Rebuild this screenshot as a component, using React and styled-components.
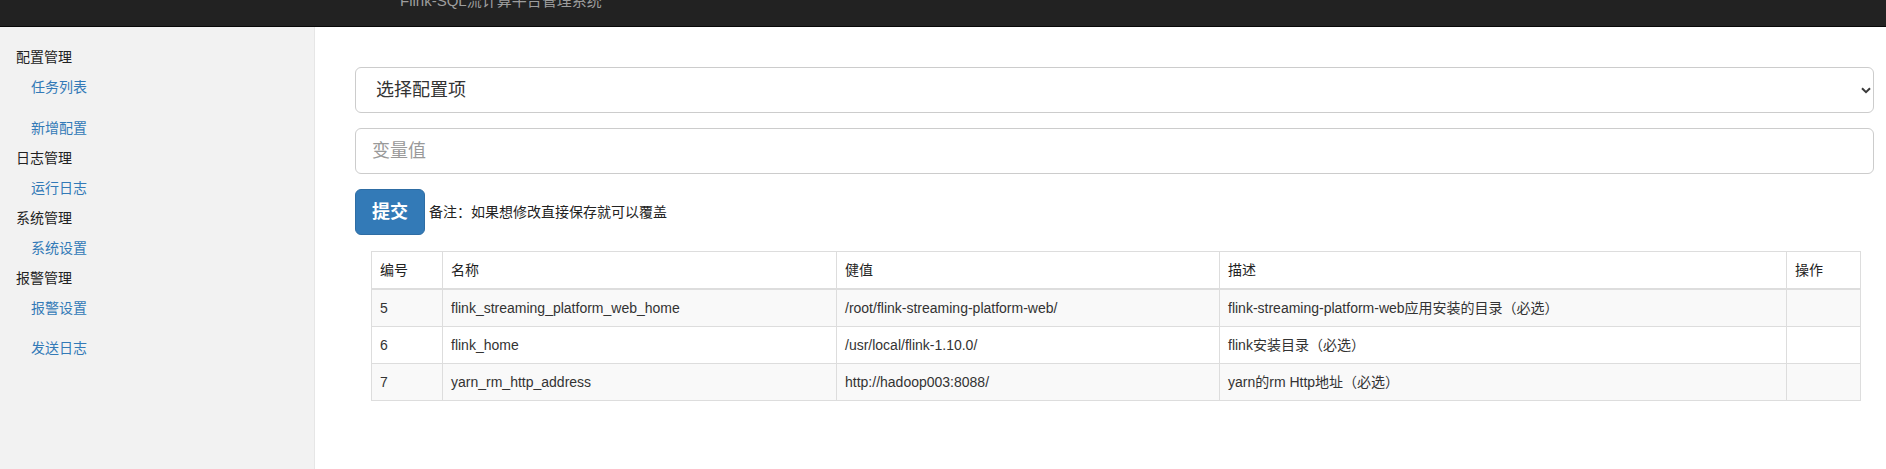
import styled, { createGlobalStyle } from 'styled-components'

const GlobalStyle = createGlobalStyle`
  html, body {
    margin: 0;
    padding: 0;
    background: #fff;
  }
  body {
    font-family: "Liberation Sans", "Noto Sans CJK SC", sans-serif;
    font-size: 14px;
    line-height: 20px;
    color: #333;
  }
  * {
    box-sizing: border-box;
  }
`

const menu = [
  { title: '配置管理', links: [{ label: '任务列表' }, { label: '新增配置', gap: 11 }] },
  { title: '日志管理', links: [{ label: '运行日志' }] },
  { title: '系统管理', links: [{ label: '系统设置' }] },
  { title: '报警管理', links: [{ label: '报警设置' }, { label: '发送日志', gap: 10 }] },
]

const columns = [
  { label: '编号', width: 71 },
  { label: '名称', width: 394 },
  { label: '健值', width: 383 },
  { label: '描述', width: 567 },
  { label: '操作', width: 74 },
]

const rows = [
  ['5', 'flink_streaming_platform_web_home', '/root/flink-streaming-platform-web/', 'flink-streaming-platform-web应用安装的目录（必选）', ''],
  ['6', 'flink_home', '/usr/local/flink-1.10.0/', 'flink安装目录（必选）', ''],
  ['7', 'yarn_rm_http_address', 'http://hadoop003:8088/', 'yarn的rm Http地址（必选）', ''],
]

export default function App() {
  return (
    <>
      <GlobalStyle />
      <Page>
        <Navbar>
          <Brand>Flink-SQL流计算平台管理系统</Brand>
        </Navbar>
        <Body>
          <Sidebar>
            {menu.map((group) => (
              <Group key={group.title}>
                <GroupTitle>{group.title}</GroupTitle>
                {group.links.map((link) => (
                  <NavLink key={link.label} href="#" $gap={link.gap || 0}>
                    {link.label}
                  </NavLink>
                ))}
              </Group>
            ))}
          </Sidebar>
          <Main>
            <Form onSubmit={(e) => e.preventDefault()}>
              <SelectWrap>
                <Select defaultValue="">
                  <option value="">选择配置项</option>
                </Select>
                <Chevron width="10" height="7" viewBox="0 0 10 7">
                  <polyline points="1,1.2 5,5.2 9,1.2" fill="none" stroke="#3a3a3a" strokeWidth="2" />
                </Chevron>
              </SelectWrap>
              <Input type="text" placeholder="变量值" />
              <Actions>
                <Button type="submit">提交</Button>
                <Note>备注：如果想修改直接保存就可以覆盖</Note>
              </Actions>
            </Form>
            <TableWrap>
              <Table>
                <colgroup>
                  {columns.map((c) => (
                    <col key={c.label} style={{ width: c.width }} />
                  ))}
                </colgroup>
                <thead>
                  <tr>
                    {columns.map((c) => (
                      <Th key={c.label}>{c.label}</Th>
                    ))}
                  </tr>
                </thead>
                <tbody>
                  {rows.map((row, i) => (
                    <Tr key={row[0]} $striped={i % 2 === 0}>
                      {row.map((cell, j) => (
                        <Td key={j}>{cell}</Td>
                      ))}
                    </Tr>
                  ))}
                </tbody>
              </Table>
            </TableWrap>
          </Main>
        </Body>
      </Page>
    </>
  )
}

const Page = styled.div`
  display: flex;
  flex-direction: column;
  min-height: 100vh;
`

const Navbar = styled.header`
  height: 27px;
  background: #222;
  border-bottom: 1px solid #080808;
  overflow: hidden;
  padding-left: 400px;
`

const Brand = styled.div`
  margin-top: -9px;
  font-size: 15px;
  line-height: 20px;
  color: #9d9d9d;
  white-space: nowrap;
`

const Body = styled.div`
  flex: 1;
  display: flex;
`

const Sidebar = styled.nav`
  width: 315px;
  flex-shrink: 0;
  background: #f2f2f2;
  border-right: 1px solid #e6e6e6;
  padding: 15px 0 0 16px;
`

const Group = styled.div`
  display: flex;
  flex-direction: column;
`

const GroupTitle = styled.div`
  line-height: 30px;
  color: #222;
`

const NavLink = styled.a`
  line-height: 30px;
  padding-left: 15px;
  margin-top: ${(p) => p.$gap}px;
  color: #337ab7;
  text-decoration: none;

  &:hover {
    color: #23527c;
  }
`

const Main = styled.main`
  flex: 1;
  min-width: 0;
  display: flex;
  flex-direction: column;
`

const Form = styled.form`
  display: flex;
  flex-direction: column;
  gap: 15px;
  padding: 40px 12px 0 40px;
`

const SelectWrap = styled.div`
  position: relative;
`

const Select = styled.select`
  appearance: none;
  width: 100%;
  height: 46px;
  padding: 10px 16px 10px 20px;
  font-family: inherit;
  font-size: 18px;
  line-height: 24px;
  color: #333;
  background: #fff;
  border: 1px solid #ccc;
  border-radius: 6px;
  outline: none;
`

const Chevron = styled.svg`
  position: absolute;
  right: 3px;
  top: 20px;
  pointer-events: none;
`

const Input = styled.input`
  width: 100%;
  height: 46px;
  padding: 10px 16px;
  font-family: inherit;
  font-size: 18px;
  line-height: 24px;
  color: #555;
  border: 1px solid #ccc;
  border-radius: 6px;
  outline: none;

  &::placeholder {
    color: #999;
  }
`

const Actions = styled.div`
  display: flex;
  align-items: center;
  gap: 4px;
`

const Button = styled.button`
  height: 46px;
  padding: 10px 16px;
  font-family: inherit;
  font-size: 18px;
  line-height: 24px;
  font-weight: bold;
  color: #fff;
  background: #337ab7;
  border: 1px solid #2e6da4;
  border-radius: 6px;
  cursor: pointer;
`

const Note = styled.span`
  font-size: 14px;
  color: #222;
`

const TableWrap = styled.div`
  padding: 16px 26px 0 56px;
`

const Table = styled.table`
  width: 100%;
  table-layout: fixed;
  border-collapse: collapse;
  border: 1px solid #ddd;
`

const Th = styled.th`
  padding: 8px;
  text-align: left;
  font-weight: normal;
  color: #222;
  border: 1px solid #ddd;
  border-bottom-width: 2px;
`

const Tr = styled.tr`
  background: ${(p) => (p.$striped ? '#f9f9f9' : '#fff')};
`

const Td = styled.td`
  padding: 8px;
  border: 1px solid #ddd;
  white-space: nowrap;
  overflow: hidden;
`
